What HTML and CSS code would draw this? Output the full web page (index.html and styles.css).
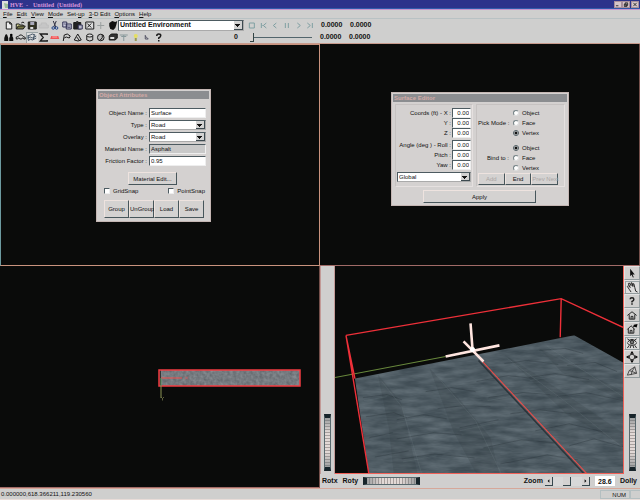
FILE: index.html
```
<!DOCTYPE html>
<html lang="en">
<head>
<meta charset="utf-8">
<title>HVE - Untitled (Untitled)</title>
<link rel="stylesheet" href="styles.css">
</head>
<body>
<header class="titlebar">
  <svg class="app-icon" viewBox="0 0 8 8"><path d="M0 0h6v8H0z" fill="#ddd"/><path d="M2 2l4 1v4H3z" fill="#9b9"/></svg>
  <span class="app-name">HVE&nbsp; -</span><span class="doc-name">Untitled&nbsp; (Untitled)</span>
  <div class="win-buttons">
    <button aria-label="Minimize"><svg viewBox="0 0 7 6"><path d="M1 4.500h3" class="s"/></svg></button>
    <button aria-label="Restore"><svg viewBox="0 0 7 6"><path d="M2.500 1h3v3h-3zM1.500 2.500h3v3h-3z" fill="none" class="s"/></svg></button>
    <button aria-label="Close" class="close"><svg viewBox="0 0 7 6"><path d="M1.500 1l4 4m0-4l-4 4" class="s"/></svg></button>
  </div>
</header>
<nav class="menu">
  <a href="#"><u>F</u>ile</a><a href="#"><u>E</u>dit</a><a href="#"><u>V</u>iew</a><a href="#"><u>M</u>ode</a><a href="#">Set-<u>u</u>p</a><a href="#"><u>3</u>-D Edit</a><a href="#"><u>O</u>ptions</a><a href="#"><u>H</u>elp</a>
</nav>
<section class="toolbars">
  <div class="bar">
    <div class="icons ten">
      <button aria-label="New"><svg viewBox="0 0 11 11"><path d="M3 2h3.500l2 2v5H3zM6.500 2v2h2" class="s" fill="#eee"/></svg></button>
      <button aria-label="Open"><svg viewBox="0 0 11 11"><path d="M1 9V4h3l1 1h3v1" fill="#dd9" class="s"/><path d="M1 9l2-3h7L8 9z" fill="#774" class="s"/><path d="M6 3q2-2 3 0" class="s" fill="none"/></svg></button>
      <button aria-label="Save"><svg viewBox="0 0 11 11"><path d="M2 2h8v7H2z" fill="#332" class="s"/><path d="M4 2h4v3H4z" fill="#aab"/><path d="M4 7h3v2H4z" fill="#ddd"/></svg></button>
      <button aria-label="Print"><svg viewBox="0 0 11 11"><path d="M3 3h5v2h2v3H1V5h2z" fill="#c6c6c6" stroke="#bdbdbd"/></svg></button>
      <button aria-label="Cut"><svg viewBox="0 0 11 11"><path d="M4 1l2.500 6M7 1L4.500 7" stroke="#334" fill="none"/><circle cx="4" cy="8" r="1.300" fill="none" stroke="#248"/><circle cx="7.300" cy="8" r="1.300" fill="none" stroke="#248"/></svg></button>
      <button aria-label="Copy"><svg viewBox="0 0 11 11"><path d="M1.500 2h4v5h-4zM5 4h5v5H5z" fill="#ccd" stroke="#335"/><path d="M6 6h3M6 7.500h3M2.500 4h2" stroke="#335" stroke-width=".7"/></svg></button>
      <button aria-label="Paste"><svg viewBox="0 0 11 11"><path d="M1.500 2.500h7V9h-7z" fill="#222" class="s"/><path d="M4 1h2v2H4z" fill="#333"/><path d="M6 5h4v4H6z" fill="#bbc" stroke="#335"/></svg></button>
      <button aria-label="Delete"><svg viewBox="0 0 11 11"><path d="M1.500 2h8v7h-8z" fill="#ddd" class="s"/><path d="M3 3.500l4 4m0-4l-4 4" class="s"/></svg></button>
      <button aria-label="Add"><svg viewBox="0 0 11 11"><path d="M5.500 2v7M2 5.500h7" stroke="#9a9f9f" fill="none"/></svg></button>
      <button aria-label="Environment"><svg viewBox="0 0 11 11"><path d="M2 3l3-2 3 1 2-1-1 4-1 3-2 2-3-1-1-3z" fill="#111"/></svg></button>
    </div>
    <span class="combo env"><select aria-label="Environment"><option>Untitled Environment</option></select></span>
    <div class="player">
      <button aria-label="Stop"><svg viewBox="0 0 11 11"><path d="M3 3h5v5H3z" class="p"/></svg></button>
      <button aria-label="First"><svg viewBox="0 0 11 11"><path d="M3 3v5M8 3L5 5.500 8 8M4 5.500h1" class="p"/></svg></button>
      <button aria-label="Back"><svg viewBox="0 0 11 11"><path d="M7 3L4 5.500 7 8" class="p"/></svg></button>
      <button aria-label="Pause"><svg viewBox="0 0 11 11"><path d="M4 3v5M7 3v5" class="p"/></svg></button>
      <button aria-label="Forward"><svg viewBox="0 0 11 11"><path d="M4 3l3 2.500L4 8" class="p"/></svg></button>
      <button aria-label="Last"><svg viewBox="0 0 11 11"><path d="M3 3l3 2.500L3 8M8 3v5" class="p"/></svg></button>
    </div>
    <span class="val">0.0000</span><span class="val">0.0000</span>
  </div>
  <div class="bar">
    <div class="icons">
      <button aria-label="Humans"><svg viewBox="0 0 11 11"><path d="M1 9V6l1-3 1-1 1 1 1 3v3zM6 9V6l1-2h2l1 2v3z" fill="#111"/><circle cx="8" cy="3" r="1.300"/></svg></button>
      <button aria-label="Vehicles"><svg viewBox="0 0 11 11"><path d="M1 7V5l2-.500L4.500 3h2L8 4.500l2 1V7H8.500a1 1 0 0 0-2 0h-2a1 1 0 0 0-2 0z" class="s" fill="none"/></svg></button>
      <button aria-label="Events" class="pressed"><svg viewBox="0 0 11 11"><path d="M1 4l3-1 2-1 3 1M1 6l3-1 2 1 4-2M2 9l2-2 2 1 4-2M2 4v4M8 3l-1 5" stroke="#456" fill="none"/></svg></button>
      <button aria-label="Sum"><svg viewBox="0 0 11 11"><path d="M9 3V2H2l3 3.500L2 9h7V8" class="s" stroke-width="1.300" fill="none"/></svg></button>
      <button aria-label="Damage"><svg viewBox="0 0 11 11"><path d="M1 7l1-3h7l1 3z" fill="#e55"/><path d="M3 5h5" stroke="#faa"/></svg></button>
      <button aria-label="Flag"><svg viewBox="0 0 11 11"><path d="M2 9l1-6 3-1 3 2-1 2-3-1-2 1" class="s" fill="none"/></svg></button>
      <button aria-label="Cone"><svg viewBox="0 0 11 11"><path d="M5.500 2L9 8q-3 2-7 0zM4.500 5l3 4" class="s" fill="none"/></svg></button>
      <button aria-label="Cylinder"><svg viewBox="0 0 11 11"><ellipse cx="5.500" cy="3.500" rx="3" ry="1.500" class="s" fill="#ddd"/><path d="M2.500 3.500V8q3 2 6 0V3.500" class="s" fill="none"/></svg></button>
      <button aria-label="Sphere"><svg viewBox="0 0 11 11"><circle cx="5.500" cy="5.500" r="3.300" class="s" fill="#bbb"/><path d="M7 3q1 3-2 5" class="s" fill="none"/></svg></button>
      <button aria-label="Box"><svg viewBox="0 0 11 11"><path d="M2 4l2-2h6v4L8 8H2z" fill="#333" class="s"/><path d="M3 5h4v2H3z" fill="#ddd"/></svg></button>
      <button aria-label="Sign"><svg viewBox="0 0 11 11"><path d="M1.500 3h8M5.500 3v6M3 4.500h5" stroke="#89999b" fill="none"/></svg></button>
      <button aria-label="Light"><svg viewBox="0 0 11 11"><circle cx="5.500" cy="4" r="2" fill="#e5df62"/><path d="M5.500 6v3" stroke="#995" stroke-width="2"/></svg></button>
      <button aria-label="Axes"><svg viewBox="0 0 11 11"><path d="M4 3v4h3M4 4l3 3" stroke="#556" fill="none"/></svg></button>
      <button aria-label="Help"><svg viewBox="0 0 11 11"><path d="M3.500 4q0-2 2-2t2 1.500T5.500 6v1M5.500 8v1.500" class="s" stroke-width="1.500" fill="none"/></svg></button>
    </div>
    <div class="timeline"><label for="time">0</label><input id="time" type="range" value="0"></div>
    <span class="val">0.0000</span><span class="val">0.0000</span>
  </div>
</section>

<main class="views">
  <section class="view active">
    <form class="dialog attributes">
      <h2>Object Attributes</h2>
      <div class="attr-body">
        <div class="fields">
          <label for="oname">Object Name :</label><input id="oname" value="Surface">
          <label for="type">Type :</label><span class="combo"><select id="type"><option>Road</option></select></span>
          <label for="over">Overlay :</label><span class="combo"><select id="over"><option>Road</option></select></span>
          <label for="mat">Material Name :</label><input id="mat" class="readonly" value="Asphalt" readonly>
          <label for="fric">Friction Factor :</label><input id="fric" value="0.95">
        </div>
        <button type="button" class="btn material">Material Edit...</button>
        <div class="checks">
          <label><input type="checkbox">GridSnap</label>
          <label><input type="checkbox">PointSnap</label>
        </div>
        <div class="actions"><button type="button" class="btn">Group</button><button type="button" class="btn">UnGroup</button><button type="button" class="btn">Load</button><button type="button" class="btn">Save</button></div>
      </div>
    </form>
  </section>

  <section class="view">
    <form class="dialog editor">
      <h2>Surface Editor</h2>
      <div class="editor-cols">
        <div class="group">
          <div class="coords">
            <label for="cx">Coords (ft) - X :</label><input id="cx" value="0.00">
            <label for="cy">Y :</label><input id="cy" value="0.00">
            <label for="cz">Z :</label><input id="cz" value="0.00">
          </div>
          <div class="coords">
            <label for="ar">Angle (deg ) - Roll :</label><input id="ar" value="0.00">
            <label for="ap">Pitch :</label><input id="ap" value="0.00">
            <label for="ay">Yaw :</label><input id="ay" value="0.00">
          </div>
          <span class="combo"><select aria-label="Frame"><option>Global</option></select></span>
        </div>
        <div class="group">
          <div class="choices">
            <div class="choice"><span>Pick Mode :</span>
              <div class="radios"><label><input type="radio" name="pick">Object</label><label><input type="radio" name="pick">Face</label><label><input type="radio" name="pick" checked>Vertex</label></div></div>
            <div class="choice"><span>Bind to :</span>
              <div class="radios"><label><input type="radio" name="bind" checked>Object</label><label><input type="radio" name="bind">Face</label><label><input type="radio" name="bind">Vertex</label></div></div>
          </div>
          <div class="actions"><button type="button" class="btn" disabled>Add</button><button type="button" class="btn">End</button><button type="button" class="btn" disabled>Prev Next</button></div>
        </div>
      </div>
      <button type="button" class="btn apply">Apply</button>
    </form>
  </section>

  <section class="view">
    <svg class="plan" viewBox="0 0 319 221" preserveAspectRatio="none">
      <defs><filter id="grain" x="0" y="0" width="100%" height="100%" color-interpolation-filters="sRGB"><feTurbulence type="fractalNoise" baseFrequency=".3" numOctaves="2" seed="3" result="n"/><feColorMatrix in="n" values=".2 0 0 0 .36  .2 0 0 0 .38  .2 0 0 0 .40  0 0 0 0 1"/></filter></defs>
      <rect x="159" y="104" width="141" height="16" filter="url(#grain)"/>
      <path d="M159 104h2v16h-2z" fill="#333"/>
      <rect x="159" y="104" width="141" height="16" fill="none" stroke="#f23c42" stroke-width="1.500"/>
      <path d="M161 112h21" stroke="#f04a48"/><path d="M185 110.500l3 3m0-3l-3 3" stroke="#d4595a" stroke-width=".7"/>
      <path d="M161 112v8" stroke="#5c9a62"/><path d="M161 120v12" stroke="#8b9555"/><path d="M161 131l1.500 1.500 1.500-1.500m-1.500 1.500v2" stroke="#7c8150" stroke-width=".7" fill="none"/>
    </svg>
  </section>

  <section class="view viewer">
    <div class="left-wheel"><div class="wheel vertical"></div></div>
    <svg class="scene" viewBox="335 266 289 206" preserveAspectRatio="none">
      <defs>
        <clipPath id="surf"><path d="M355 378L575 335 624 362V473H369z"/></clipPath>
        <filter id="road" x="0" y="0" width="100%" height="100%" color-interpolation-filters="sRGB"><feTurbulence type="fractalNoise" baseFrequency=".04 .18" numOctaves="4" seed="8" result="n"/><feColorMatrix in="n" values=".2 0 0 0 .21  .2 0 0 0 .26  .2 0 0 0 .29  0 0 0 0 1"/></filter>
      </defs>
      <g clip-path="url(#surf)">
        <rect x="335" y="320" width="289" height="153" filter="url(#road)"/>
        <g fill="#303a42" opacity=".2">
          <path d="M378 374l23 27 17 72h-24l-5-46zM430 368l27 27 34 42 9 36h-23l-23-42zM506 355l34 21 84 56v13l-57-32zM540 348l84 43v9l-61-28z"/>
        </g>
        <g stroke="#252e35" stroke-width=".8" opacity=".4" fill="none">
          <path d="M363 397l24-3 15 5M366 416l28-4 13 5M369 437l24-5M375 456l34-6M397 419l27-5 23 4M397 438l37-6 28 2M402 458l33-5 40 4M426 391l26-4 24 4M438 408l25-3 28 1M460 427l39-8M484 447l38-8 33 3M501 463l47-9 31 5M477 381l32-6 25 3M489 397l34-5 28 2M511 413l30-4 31 4M536 430l34-7 34 8M505 363l24-3 30 4M530 377l26-4 34 6M558 396l29-4 37 8M570 445l25-7 29 8M540 350l26-2 18 5M568 365l28-3 22 9"/>
        </g>
        <g stroke="#758087" stroke-width=".7" opacity=".3" fill="none"><path d="M382 381l20 25 20 67M436 374l40 46 26 53M508 358l57 42 59 47M548 346l76 50M364 400l23-4M397 422l28-6M403 461l34-6M460 430l38-8M488 400l34-6M531 380l27-5"/></g>
      </g>
      <path d="M335 377L446 356" stroke="#68883c" fill="none"/>
      <path d="M479 360L586 474" stroke="#2c353b" stroke-width="1.500"/>
      <path d="M346 335L562 298.500 624 327M562 298.500L561 337M346 335L355 378M346 335L369 473" fill="none" stroke="#ee3039" stroke-width="1.400"/>
      <path d="M481 359L588 473" stroke="#f24a45"/>
      <path d="M446 356L500 345M471 323L473 349M464 341L484 361" stroke="#ffe5df" stroke-width="2.600"/>
      <circle cx="473" cy="349" r="2.500" fill="#fff"/>
    </svg>
    <div class="side">
      <div class="tools">
        <button aria-label="Select"><svg viewBox="0 0 14 13"><path d="M5 2l5 6H7.500l1.500 3-1 .5-1.500-3L5 10z" fill="#111"/></svg></button>
        <button aria-label="Hand" class="pressed"><svg viewBox="0 0 14 13"><path d="M4 9L2 6l1-1 2 2-2-4 1-1 2 3V2h1l1 4V3h1l1 4 1 4 2 1M4 9l2 3" fill="#ddd" class="s"/></svg></button>
        <button aria-label="Help"><svg viewBox="0 0 14 13"><path d="M5 4.500Q5 3 7 3t2 1.500T7 7v1M7 9v1.500" class="s" stroke-width="1.600" fill="none"/></svg></button>
        <button aria-label="Home"><svg viewBox="0 0 14 13"><path d="M2 7l5-4 5 4M4 6v5h6V6M6 11V8h2v3" class="s" fill="none"/></svg></button>
        <button aria-label="Set home"><svg viewBox="0 0 14 13"><path d="M2 7l4-4 4 4M3 6v5h6V6M5 11V8h2v3" class="s" fill="none"/><path d="M13 1l-1 4-2-1-2 1 1-3z"/></svg></button>
        <button aria-label="View all" class="pressed"><svg viewBox="0 0 14 13"><circle cx="7" cy="5.500" r="2" class="s" fill="#777"/><path d="M2 2l3 2M12 2L9 4M2 6q5-7 10 0M2 7q5 4 10 0M4 9l-2 3M10 9l2 3M6 9l-1 3M8 9l1 3" class="s" fill="none"/></svg></button>
        <button aria-label="Seek"><svg viewBox="0 0 14 13"><path d="M7 0L5 3h4zM7 13L5 10h4zM.5 6.500l3-2v4zM13.500 6.500l-3-2v4z"/><circle cx="7" cy="6.500" r="3" class="s" fill="none"/></svg></button>
        <button aria-label="Projection"><svg viewBox="0 0 14 13"><path d="M2 11l2-5 6-4 2 7zM4 6l3 1 3-5M7 7l5 2M7 7l-1 4" stroke="#444" fill="none"/></svg></button>
      </div>
      <div class="wheel vertical"></div>
    </div>
    <div class="viewer-foot">
      <span>Rotx</span><span>Roty</span><div class="wheel"></div>
      <label class="zoom-label" for="zoom">Zoom</label>
      <div class="scroller"><button aria-label="Zoom out"><svg viewBox="0 0 8 8"><path d="M5 2v4L3 4z"/></svg></button><button aria-label="Zoom position"></button><button aria-label="Zoom in"><svg viewBox="0 0 8 8"><path d="M3 2v4l2-2z"/></svg></button></div>
      <input id="zoom" value="28.6"><span>Dolly</span>
    </div>
  </section>
</main>
<footer class="status"><span class="position">0.000000,618.366211,119.230560</span><span class="cell">NUM</span><span class="cell blank"></span></footer>
</body>
</html>
```
FILE: styles.css
```
* { box-sizing: border-box; }
body {
  margin: 0;
  height: 100vh;
  display: flex;
  flex-direction: column;
  background: #cfcfce;
  color: #111;
  font: 6px/8px "Liberation Sans", sans-serif;
  overflow: hidden;
}
button, input, select {
  font: inherit;
  color: inherit;
  margin: 0;
  padding: 0;
  border: 0;
  border-radius: 0;
  background: none;
  appearance: none;
  min-width: 0;
  outline: 0;
}
svg { display: block; width: 100%; height: 100%; }
.s { stroke: #1c1c1c; }
.p { stroke: #7f9fa2; fill: none; }

.titlebar {
  height: 10px;
  flex: none;
  display: flex;
  align-items: center;
  background: #2d338b;
  border-bottom: 1px solid #c596cf;
  box-shadow: inset 0 -1px #315bab;
  color: #d796dc;
  font-family: "Liberation Serif", serif;
  font-weight: bold;
}
.app-icon { width: 8px; height: 8px; margin: 0 0 0 2px; }
.app-name { width: 23px; }
.win-buttons { display: flex; margin: 0 1px 0 auto; }
.win-buttons button { width: 8px; height: 7px; background: #d5c5c9; border: 1px solid #a98f9b; }
.win-buttons .close { margin-left: 1px; }

.menu {
  height: 9px;
  flex: none;
  display: flex;
  align-items: center;
  gap: 4px;
  padding-left: 3px;
  border-bottom: 1px solid #b9c2c4;
}
.menu a { color: inherit; text-decoration: none; }

.toolbars { flex: none; height: 24px; }
.bar { height: 12px; display: flex; align-items: center; font-weight: bold; }
.icons { display: grid; grid-template-columns: repeat(14, 1fr); width: 161px; margin-left: 3px; }
.icons.ten { grid-template-columns: repeat(10, 1fr); width: 115px; }
.icons button { height: 11px; }
.pressed { background: #dedede; box-shadow: inset 1px 1px #9aa4a6; }
.combo { position: relative; display: block; height: 10px; background: #fff; border: 1px solid #4d5b61; border-right-color: #aaa; border-bottom-color: #aaa; }
.combo select { display: block; width: 100%; height: 100%; padding-left: 1px; line-height: 8px; }
.combo::after {
  content: "";
  position: absolute;
  right: 0;
  top: 0;
  bottom: 0;
  width: 8px;
  background: linear-gradient(#111, #111) 1px 3px / 5px 1px no-repeat, linear-gradient(#111, #111) 2px 4px / 3px 1px no-repeat, linear-gradient(#111, #111) 3px 5px / 1px 1px no-repeat, #d2d2d2;
  border-right: 1px solid #3d4a50;
  border-bottom: 1px solid #3d4a50;
  pointer-events: none;
}
.env { width: 126px; height: 11px; font-size: 7px; }
.player { display: grid; grid-template-columns: repeat(6, 1fr); width: 70px; margin: 0 5px 0 2px; }
.player button { height: 11px; }
.val { width: 29px; font-size: 7px; }
.timeline { display: flex; align-items: center; gap: 12px; width: 148px; padding-left: 70px; margin-right: 8px; font-size: 7px; }
.timeline input { flex: 1; height: 9px; background: linear-gradient(#52656c, #52656c) center / 100% 1px no-repeat; }
.timeline input::-webkit-slider-thumb { appearance: none; width: 4px; height: 9px; background: #d6d2d0; border-right: 1px solid #344; border-bottom: 1px solid #344; }

.views { flex: 1; min-height: 0; display: grid; grid-template: 1fr 1fr / 1fr 1fr; border-top: 1px solid #c79a8c; }
.view { position: relative; min-width: 0; min-height: 0; background: #0a0b0a; border-right: 1px solid #75504b; border-bottom: 1px solid #a16b67; }
.active { border: 1px solid #c9937e; border-left-color: #6c9a9f; }

.dialog { position: absolute; background: #d4d1d0; border: 1px solid #c4b6b3; padding: 1px; }
.dialog h2 { margin: 0; height: 8px; padding-left: 1px; background: #8b8d90; color: #d3aaa6; font-size: 6px; line-height: 8px; }
.dialog input { background: #fff; border: 1px solid #4d5b61; border-right-color: #eee; border-bottom-color: #eee; padding-left: 1px; width: 100%; height: 10px; }
.btn { height: 13px; background: #d4d2d1; border: 1px solid #eee3df; border-right-color: #47565b; border-bottom-color: #47565b; text-align: center; white-space: nowrap; }
.btn:disabled { color: #aaa5a4; }
.actions { display: grid; grid-auto-flow: column; grid-auto-columns: 1fr; }

.attributes { left: 95px; top: 44px; width: 115px; }
.attr-body { padding: 9px 3px 2px 6px; }
.fields { display: grid; grid-template-columns: 43px 1fr; gap: 2px; align-items: center; }
.fields label, .coords label { text-align: right; white-space: nowrap; }
.dialog .readonly { background: #c9c9c9; }
.material { display: block; width: 49px; margin: 6px auto 0 24px; }
.checks { display: flex; justify-content: space-between; padding: 2px 1px 5px 0; }
.checks label { display: flex; align-items: center; gap: 3px; }
.dialog .checks input { width: 6px; height: 6px; padding: 0; }
.attributes .actions { width: 100px; }
.attributes .actions .btn { height: 18px; }

.editor { left: 71px; top: 48px; width: 178px; }
.editor-cols { display: grid; grid-template-columns: 78px 1fr; gap: 3px; padding: 2px; }
.group { border: 1px solid #c6c2c1; border-right-color: #e5e0df; border-bottom-color: #e5e0df; padding: 3px 1px 1px; }
.coords { display: grid; grid-template-columns: 1fr 19px; gap: 0 1px; align-items: center; margin-bottom: 2px; }
.coords input { text-align: right; padding-right: 1px; }
.choices { display: grid; gap: 5px; }
.choice { display: grid; grid-template-columns: 31px 1fr; gap: 4px; align-items: center; height: 30px; }
.choice > span { text-align: right; white-space: nowrap; }
.radios label { display: flex; align-items: center; gap: 3px; height: 10px; }
.dialog .radios input { width: 6px; height: 6px; padding: 0; border-radius: 50%; border-color: #758286 #ddd #ddd #758286; }
.dialog .radios input:checked { background: radial-gradient(#111 1px, #fff 2px); border-color: #4d5b61; }
.editor .actions { margin-right: 5px; }
.editor .actions .btn { height: 12px; }
.apply { display: block; width: 113px; margin: 1px 0 1px 30px; }

.viewer { display: grid; grid-template: 1fr 14px / 15px 1fr 16px; background: #d0cfce; border: 0; }
.left-wheel { display: flex; flex-direction: column; justify-content: end; align-items: center; padding-bottom: 3px; border-left: 1px solid #c29a97; border-right: 1px solid #c29a97; }
.scene { min-height: 0; background: #0a0b0a; border-right: 1px solid #f06158; border-bottom: 1px solid #f06158; }
.side { min-height: 0; display: flex; flex-direction: column; align-items: center; justify-content: space-between; padding-bottom: 3px; }
.tools { align-self: stretch; }
.tools button { display: block; width: 100%; height: 14px; border: 1px solid #e2e2e2; border-right-color: #929b9d; border-bottom-color: #929b9d; }
.wheel {
  width: 57px;
  height: 8px;
  border: 1px solid #59696e;
  border-width: 1px 4px;
  border-color: #59696e #17242a;
  background: linear-gradient(90deg, #5f6b6f88, #fff0 30% 70%, #5f6b6f88), repeating-linear-gradient(90deg, #e2d9d6 0 2px, #a8a09e 2px 3px);
}
.wheel.vertical {
  width: 7px;
  height: 57px;
  border-width: 4px 1px;
  border-color: #17242a #59696e;
  background: linear-gradient(#5f6b6f88, #fff0 30% 70%, #5f6b6f88), repeating-linear-gradient(#e2d9d6 0 2px, #a8a09e 2px 3px);
}
.viewer-foot { grid-column: 1 / -1; display: flex; align-items: center; gap: 5px; padding: 0 3px 0 2px; font-size: 7px; font-weight: bold; }
.zoom-label { margin-left: auto; }
.scroller { display: flex; justify-content: space-between; width: 45px; margin-left: -3px; background: #d8d8d8; }
.scroller button { width: 8px; height: 9px; background: #d4d2d1; border-right: 1px solid #36474d; border-bottom: 1px solid #36474d; }
.viewer-foot input { width: 20px; height: 10px; background: #fff; text-align: center; }

.status { flex: none; height: 12px; display: flex; align-items: center; padding-left: 1px; border-top: 1px solid #d6a89a; border-bottom: 1px solid #e8dcd8; }
.position { margin-right: auto; }
.cell { width: 30px; height: 9px; padding-right: 3px; border: 1px solid #b4bfc1; text-align: right; }
.blank { width: 10px; border-right: 0; }
```
